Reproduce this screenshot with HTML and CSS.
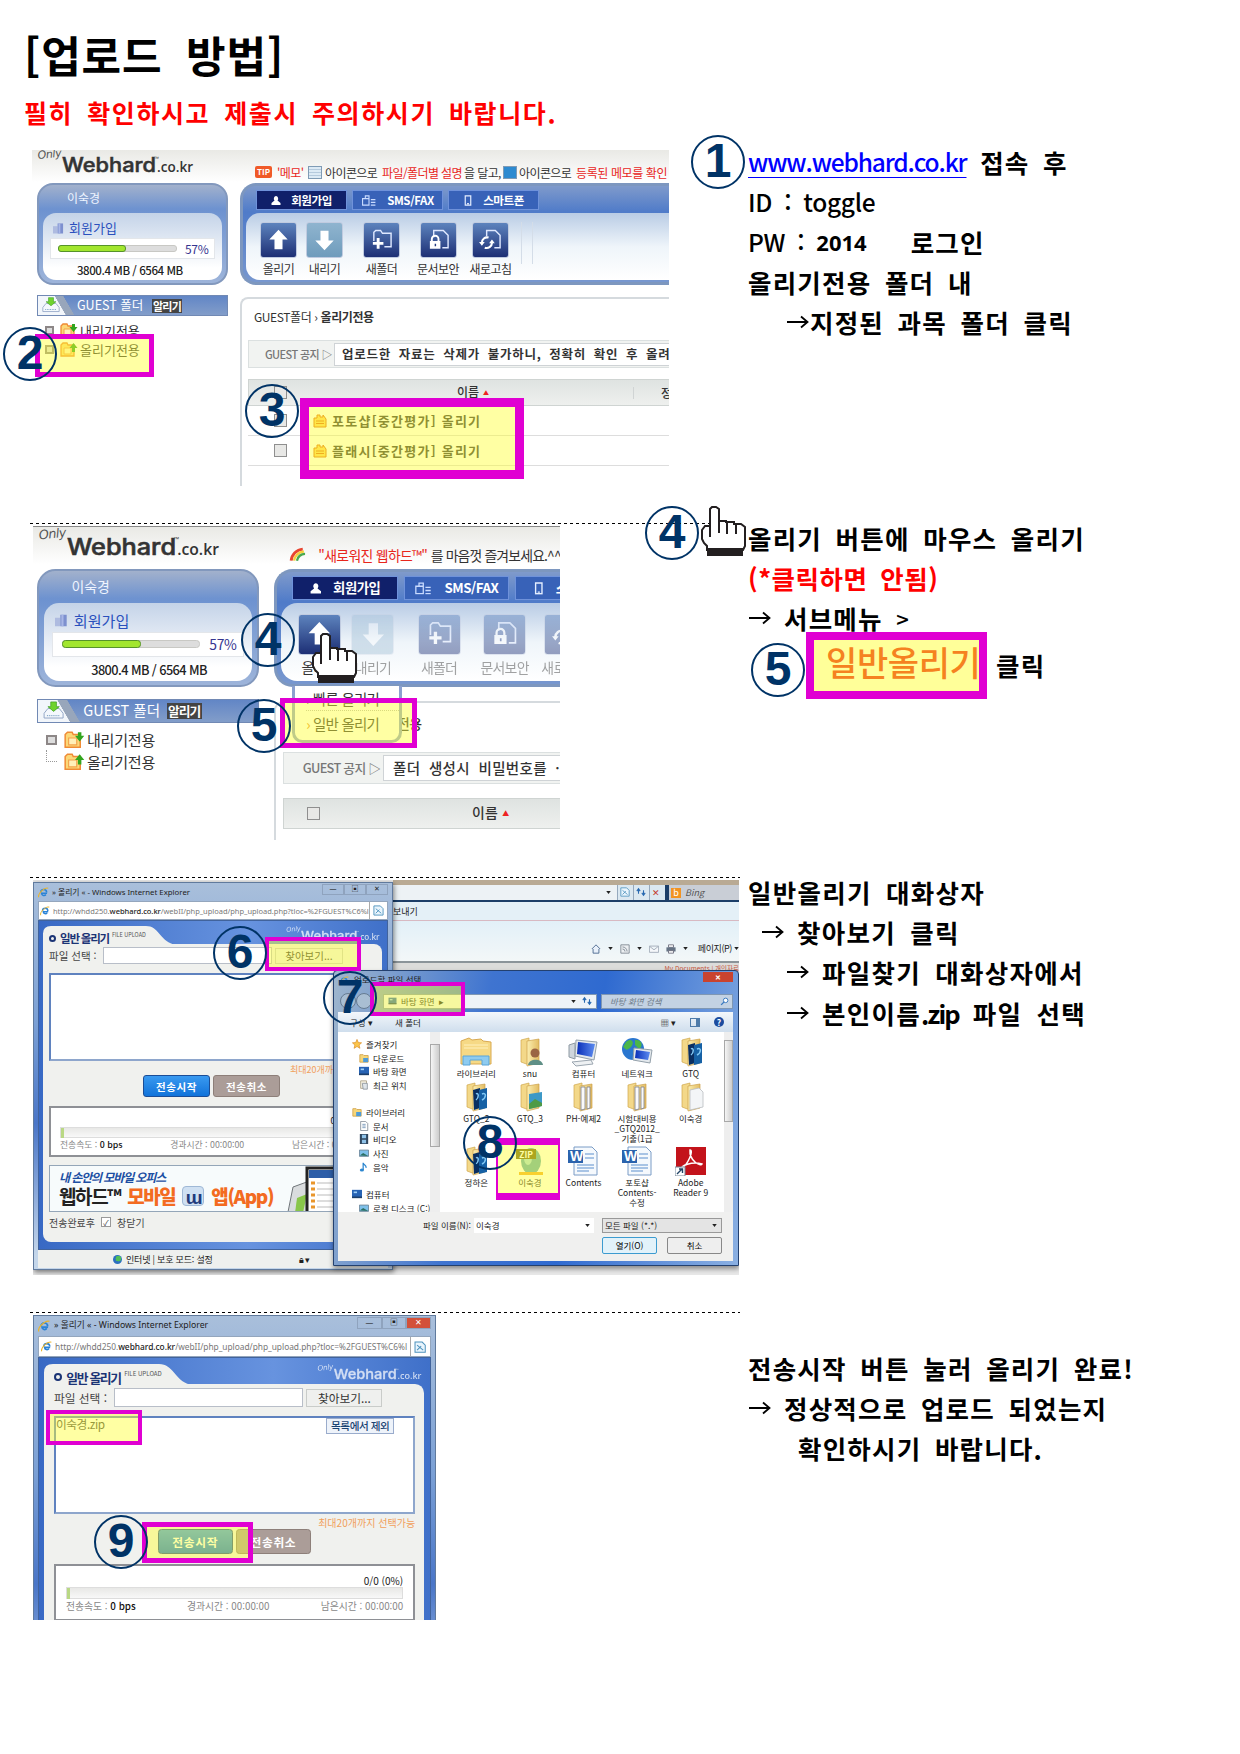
FILE: index.html
```html
<!DOCTYPE html>
<html lang="ko">
<head>
<meta charset="utf-8">
<title>업로드 방법</title>
<link rel="stylesheet" href="styles.css">
</head>
<body>
<svg class="defs" aria-hidden="true">
  <defs>
    <linearGradient id="gFolder" x1="0" x2="1"><stop offset="0" stop-color="#fbeeb0"/><stop offset="1" stop-color="#e3bc62"/></linearGradient>
    <linearGradient id="gScreen" x1="0" x2="1"><stop offset="0" stop-color="#0a2fb8"/><stop offset="1" stop-color="#5d8cf0"/></linearGradient>
    <symbol id="logo" viewBox="0 0 160 30">
      <text x="1" y="10" class="logo-only" textLength="24" transform="rotate(-6 1 10)">Only</text>
      <text x="25" y="23" class="logo-name" textLength="94" lengthAdjust="spacingAndGlyphs">Webhard</text>
      <text x="117" y="11" class="logo-tm">™</text>
      <text x="120" y="23" class="logo-tld" textLength="36" lengthAdjust="spacingAndGlyphs">.co.kr</text>
    </symbol>
    <symbol id="hand" viewBox="0 0 46 51">
      <path d="M9 31V3L11 1H15L18 3V15H25V16H33V18H40L44 21V40L42 44H6V40L3 37L1 33V24L4 20H9Z" fill="#fff" stroke="#231f20" stroke-width="2"/>
      <path d="M18 15V27M26 16V28M35 18V28" stroke="#231f20" stroke-width="2" fill="none"/>
      <path d="M6 42H42V50H6Z" fill="#231f20"/>
    </symbol>
    <symbol id="arrow" viewBox="0 0 24 16"><path d="M1 8H21M15 2.5L21.5 8L15 13.5" fill="none" stroke="#000" stroke-width="1.8"/></symbol>
    <symbol id="up" viewBox="0 0 20 20"><path d="M10 1L18 9.5H13.5V18H6.500V9.500H2Z" fill="#fff"/></symbol>
    <symbol id="newfolder" viewBox="0 0 24 24"><path d="M4 13V4L6 2H11L13 5H22V19H15" fill="none" stroke="#dfe8ff" stroke-width="1.5"/><path d="M7 10H10V14H14V17H10V21H7V17H3V14H7Z" fill="#fff"/></symbol>
    <symbol id="lock" viewBox="0 0 24 24"><path d="M7 9V2H17L22 7V20H16" fill="none" stroke="#dfe8ff" stroke-width="1.5"/><path d="M5 14V11A3.500 3.500 0 0 1 12 11V14" fill="none" stroke="#fff" stroke-width="2"/><path d="M3 13H14V21H3Z" fill="#fff"/><path d="M8 16H9.500V18.500H8Z" fill="#223a80"/></symbol>
    <symbol id="refresh" viewBox="0 0 24 24"><path d="M8 8V2H17L22 7V20H16" fill="none" stroke="#dfe8ff" stroke-width="1.500"/><path d="M10 9.500A5.500 5.500 0 0 0 3 15M6 20A5.500 5.500 0 0 0 13.500 15" fill="none" stroke="#fff" stroke-width="2.200"/><path d="M0 14H6L3 18ZM10.500 15.500H16.500L13.500 11.500Z" fill="#fff"/></symbol>
    <symbol id="person" viewBox="0 0 10 10"><path d="M5 0.500A2.200 2.600 0 0 1 6.500 5L9.500 7.500V9.500H.5V7.500L3.500 5A2.200 2.600 0 0 1 5 .5Z" fill="#fff"/></symbol>
    <symbol id="fax" viewBox="0 0 16 12"><path d="M4 4V1H8V4M8 4V11H1V4ZM10 5H15M10 8H15M10 11H15" fill="none" stroke="#c9dbff" stroke-width="1.200"/></symbol>
    <symbol id="phone" viewBox="0 0 10 12"><path d="M2 1H8V11H2ZM4 9.500H6" fill="none" stroke="#e5eeff" stroke-width="1.300"/></symbol>
    <symbol id="building" viewBox="0 0 12 12"><path d="M0 4H5V12H0Z" fill="#aebbe0"/><path d="M5 1H11V12H5Z" fill="#7d90cf"/><path d="M6 1H8V12H6Z" fill="#a9b7e6"/></symbol>
    <symbol id="drive" viewBox="0 0 24 22"><path d="M2 14L6 9H18L22 14V19H2Z" fill="#f4f8fd" stroke="#8fa3c4"/><path d="M5 16.500H19" stroke="#5c89b4" stroke-dasharray="1 1"/><path d="M9 2H15V7H18L12 12L6 7H9Z" fill="#6fd32e" stroke="#379b1e" stroke-width=".7"/></symbol>
    <symbol id="fdown" viewBox="0 0 18 16"><path d="M1 3L3 1H7L8 3H14V14H1Z" fill="#fbd878" stroke="#f08b35" stroke-width="1.300"/><path d="M4 6H11V12H4Z" fill="#fff0b8" stroke="#f3a24a"/><path d="M12 1H15V4H17.500L13.500 9L9.500 4H12Z" fill="#32a51e"/></symbol>
    <symbol id="ftop" viewBox="0 0 18 16"><path d="M1 3L3 1H7L8 3H14V14H1Z" fill="#fbd878" stroke="#f08b35" stroke-width="1.300"/><path d="M4 6H11V12H4Z" fill="#fff0b8" stroke="#f3a24a"/><path d="M12 10H15V6H17.500L13.500 1L9.500 6H12Z" fill="#32a51e"/></symbol>
    <symbol id="fileicon" viewBox="0 0 14 14"><path d="M1 4H4V1H7V3H10V1L13 5V13H1Z" fill="#ffd25a" stroke="#e06c10"/><path d="M3 7H11M3 9.500H11" stroke="#e06c10"/></symbol>
    <symbol id="ie" viewBox="0 0 14 14"><path d="M11.500 8H4.500A3 3 0 0 0 10 9.500" fill="none" stroke="#2b83d6" stroke-width="2"/><path d="M3.500 7A3.700 3.700 0 0 1 11 7" fill="none" stroke="#2b83d6" stroke-width="2"/><path d="M1 13C-1 9 8 0 13 1.500" fill="none" stroke="#e8b52f" stroke-width="1.400"/></symbol>
    <symbol id="page" viewBox="0 0 12 12"><path d="M1 1H8L11 4V11H1Z" fill="#e9f5fd" stroke="#4f93bd"/><path d="M3 4L9 9M3 9L7 5" stroke="#4f93bd"/></symbol>
    <symbol id="folder" viewBox="0 0 32 30"><path d="M7 3L15 1V28L7 25Z" fill="#f3d889" stroke="#d0a64c" stroke-width=".7"/><path d="M13 4L25 2V26L13 29Z" fill="url(#gFolder)" stroke="#cda14b" stroke-width=".7"/></symbol>
    <symbol id="psfolder" viewBox="0 0 32 30"><use href="#folder"/><path d="M13 8L20 6V26L14 28Z" fill="#0a2f62"/><path d="M19 8L27 6V26L19 28Z" fill="#1661a5"/><path d="M22 12C27 10 26 16 22 18M16 12C19 10 19 16 16 18" stroke="#80c8f5" stroke-width="1.500" fill="none"/></symbol>
    <symbol id="userfolder" viewBox="0 0 32 30"><use href="#folder"/><circle cx="21" cy="16" r="4.500" fill="#9a6544"/><path d="M14 28C15 21 28 21 29 28Z" fill="#5f8f86"/></symbol>
    <symbol id="photofolder" viewBox="0 0 32 30"><use href="#folder"/><path d="M15 12L28 10V24L15 27Z" fill="#3d99c7"/><path d="M15 22L21 17L28 21V24L15 27Z" fill="#4f9a45"/></symbol>
    <symbol id="docfolder" viewBox="0 0 32 30"><use href="#folder"/><path d="M14 5H18V27L14 28ZM20 5H23V26L20 27Z" fill="#fafafa" stroke="#7b7f8c" stroke-width=".8"/></symbol>
    <symbol id="emptyfolder" viewBox="0 0 32 30"><use href="#folder"/><path d="M15 8L24 6L28 10V25L15 28Z" fill="#f3f5f7" stroke="#b9bcc0" stroke-width=".8"/></symbol>
    <symbol id="library" viewBox="0 0 32 30"><path d="M1 4L9 1L12 3L21 2L23 4L31 5V27H1Z" fill="#f6d985" stroke="#d9a951"/><path d="M4 8H28M4 11H28" stroke="#fff1bd"/><path d="M3 19H29V28H22V23H10V28H3Z" fill="#8ecbf0" stroke="#5ba5d8"/></symbol>
    <symbol id="pc" viewBox="0 0 32 30"><path d="M2 8L8 6V22L2 20Z" fill="#cfd6dc" stroke="#8f9aa3"/><path d="M9 3L30 5L27 23L8 19Z" fill="#e4e9ed" stroke="#93a0aa"/><path d="M11 5L28 7L25 20L10 17Z" fill="url(#gScreen)"/><path d="M5 25L24 23L26 27L9 29Z" fill="#eef1f3" stroke="#9ba6b0"/></symbol>
    <symbol id="net" viewBox="0 0 32 30"><circle cx="12" cy="12" r="11" fill="#2a76cf"/><path d="M5 5C11 0 14 6 10 10C4 16 4 10 2 10ZM14 3C22 2 22 10 18 12L14 8Z" fill="#4bb649"/><path d="M13 11L31 13L29 26L12 23Z" fill="#e4e9ed" stroke="#93a0aa"/><path d="M15 13L29 15L27 23L14 21Z" fill="url(#gScreen)"/></symbol>
    <symbol id="word" viewBox="0 0 32 30"><path d="M7 1H25L30 6V29H7Z" fill="#f5f9fd" stroke="#7a9cc6"/><path d="M18 8H27M18 12H27M10 19H27M10 22H27M10 25H22" stroke="#8fb2dd" stroke-width="1.300"/><path d="M1 4H16V17H1Z" fill="#2b63ad"/><text x="3" y="15" class="word-w">W</text></symbol>
    <symbol id="adobe" viewBox="0 0 32 30"><path d="M1 1H31V29H1Z" fill="#c3131b"/><path d="M15 4C19 4 13 19 6 23C5 20 17 15 27 18C26 21 14 15 15 4Z" fill="none" stroke="#fff" stroke-width="1.500"/><path d="M0 21H10V30H0Z" fill="#fff" stroke="#789"/><path d="M2 28L7 23M4 23H7.500V27" stroke="#246" stroke-width="1.400" fill="none"/></symbol>
    <symbol id="egg" viewBox="0 0 32 30"><ellipse cx="17" cy="15" rx="10" ry="13" fill="#5aa9b4"/><ellipse cx="14" cy="12" rx="4" ry="7" fill="#a5dcdc"/><path d="M5 26H29V29H5Z" fill="#f2a92a"/></symbol>
    <symbol id="star" viewBox="0 0 12 12"><path d="M6 .5L7.600 4.300L11.500 4.600L8.500 7.200L9.500 11.200L6 9L2.500 11.200L3.500 7.200L.5 4.600L4.400 4.300Z" fill="#fbc54a" stroke="#d98a23" stroke-width=".8"/></symbol>
    <symbol id="note" viewBox="0 0 12 12"><path d="M5 9.500V1C6 4 9 3.500 8.500 7" fill="none" stroke="#2c86cf" stroke-width="1.500"/><ellipse cx="3.500" cy="9.500" rx="2.500" ry="1.800" fill="#2c86cf"/></symbol>
    <symbol id="minifolder" viewBox="0 0 12 12"><path d="M1 2H5L6 3H11V11H1Z" fill="#f6d679" stroke="#d0a24b"/><path d="M5 6H11V11H5Z" fill="#4e9cd8"/></symbol>
    <symbol id="screen" viewBox="0 0 12 12"><path d="M0 1H12V10H0Z" fill="#2763b4"/><path d="M2 3H6V5H2Z" fill="#9fd0f7"/><path d="M0 9H12V11H0Z" fill="#1c3f6b"/></symbol>
    <symbol id="recent" viewBox="0 0 12 12"><path d="M2 1H9V10H2Z" fill="#f6f2e3" stroke="#a99f86"/><path d="M4 4H10V11H5Z" fill="#dfe5ea" stroke="#8b949c"/></symbol>
    <symbol id="doc" viewBox="0 0 12 12"><path d="M2 .5H8L10.500 3V11.500H2Z" fill="#fff" stroke="#7f8995"/><path d="M4 4H8M4 6H8M4 8H8" stroke="#6d8fb4"/></symbol>
    <symbol id="film" viewBox="0 0 12 12"><path d="M1 0H11V12H1Z" fill="#30475f"/><path d="M3.500 1H8.500V5H3.500ZM3.500 7H8.500V11H3.500Z" fill="#8fc2e8"/></symbol>
    <symbol id="photo" viewBox="0 0 12 12"><path d="M.5 2.500H11.500V10H.5Z" fill="#7ec0ea" stroke="#667e92"/><path d="M1 9L5 6L11 9.500Z" fill="#2b6f62"/></symbol>
    <symbol id="home" viewBox="0 0 12 12"><path d="M1 6L6 1L11 6M2.500 6V11H9.500V6" fill="#e8f0fa" stroke="#3d5c85"/></symbol>
    <symbol id="rss" viewBox="0 0 12 12"><path d="M1 1H11V11H1Z" fill="#eceff2" stroke="#77818c"/><path d="M3 6A3 3 0 0 1 6 9M3 3.500A5.500 5.500 0 0 1 8.500 9" fill="none" stroke="#77818c"/></symbol>
    <symbol id="mail" viewBox="0 0 12 12"><path d="M.5 2.500H11.500V10H.5ZM1 3L6 7L11 3" fill="#f5f7fa" stroke="#9aa5b2"/></symbol>
    <symbol id="print" viewBox="0 0 12 12"><path d="M3 1H9V4H3Z" fill="#fff" stroke="#667"/><path d="M.5 4H11.500V9H.5Z" fill="#657384"/><path d="M3 8H9V11H3Z" fill="#fff" stroke="#667"/></symbol>
    <symbol id="glass" viewBox="0 0 12 12"><circle cx="7.500" cy="4.500" r="3" fill="#fff" stroke="#3d7bc0" stroke-width="1.300"/><path d="M5.500 6.500L1.500 10.500" stroke="#3d7bc0" stroke-width="1.800"/></symbol>
    <symbol id="caret" viewBox="0 0 6 4"><path d="M0 0H6L3 4Z" fill="#222"/></symbol>
    <symbol id="reload" viewBox="0 0 12 12"><path d="M3 8V3M1 5L3 2L5 5M9 4V10M7 7L9 10L11 7" fill="none" stroke="#2768b0" stroke-width="1.300"/></symbol>
    <symbol id="tab" viewBox="0 0 130 20" preserveAspectRatio="none"><path d="M0 20V8Q0 0 8 0H103C117 0 117 18 134 20Z" fill="#f0f1ee"/></symbol>
  </defs>
</svg>
<main class="page">
  <header class="doc-head">
    <h1>[업로드 방법]</h1>
    <p>필히 확인하시고 제출시 주의하시기 바랍니다.</p>
  </header>

  <section class="step step-1">
    <div class="shot-cell">
      <div class="hard">
        <div class="hard-top">
          <svg class="logo"><use href="#logo"/></svg>
          <p class="tip"><b class="tip-badge">TIP</b><span class="red t-memo">'메모'</span><i class="tip-grid"></i><span class="t-a">아이콘으로</span><span class="red t-b">파일/폴더별 설명</span><span class="t-c">을 달고,</span><i class="tip-grid blue"></i><span class="t-a">아이콘으로</span><span class="red t-e">등록된 메모를 확인</span></p>
        </div>
        <div class="hard-body">
          <aside class="side">
            <div class="user">
              <p class="user-name">이숙경</p>
              <div class="user-in">
                <p class="join"><svg><use href="#building"/></svg>회원가입</p>
                <div class="quota"><span class="meter"><i></i></span>57%</div>
                <p class="size">3800.4 MB / 6564 MB</p>
              </div>
            </div>
            <div class="guest"><span class="guest-tab"><svg><use href="#drive"/></svg></span><span class="guest-name">GUEST 폴더</span><b>알리기</b></div>
            <ul class="tree">
              <li><i class="plus"></i><svg><use href="#fdown"/></svg>내리기전용</li>
              <li><i class="plus"></i><svg><use href="#ftop"/></svg>올리기전용</li>
            </ul>
          </aside>
          <div class="work">
            <div class="bar">
              <div class="tabs"><span class="on"><svg><use href="#person"/></svg>회원가입</span><span><svg class="wide"><use href="#fax"/></svg>SMS/FAX</span><span><svg><use href="#phone"/></svg>스마트폰</span></div>
              <div class="tools">
                <span><i class="ico"><svg><use href="#up"/></svg></i>올리기</span>
                <span><i class="ico pale"><svg class="flip"><use href="#up"/></svg></i>내리기</span>
                <span><i class="ico"><svg><use href="#newfolder"/></svg></i>새폴더</span>
                <span><i class="ico"><svg><use href="#lock"/></svg></i>문서보안</span>
                <span><i class="ico"><svg><use href="#refresh"/></svg></i>새로고침</span>
                <span class="grip"></span>
              </div>
            </div>
            <div class="list">
              <p class="crumb">GUEST폴더 › <b>올리기전용</b></p>
              <div class="notice"><span>GUEST 공지 ▷</span><p>업로드한 자료는 삭제가 불가하니, 정확히 확인 후 올려</p></div>
              <div class="thead"><i class="box"></i><span class="col-name">이름<em>▲</em></span><span class="col-info">정</span></div>
              <div class="trow"><i class="box"></i><svg><use href="#fileicon"/></svg>포토샵[중간평가] 올리기</div>
              <div class="trow"><i class="box"></i><svg><use href="#fileicon"/></svg>플래시[중간평가] 올리기</div>
            </div>
          </div>
        </div>
      </div>
    </div>
    <div class="guide">
      <p><a class="latin link">www.webhard.co.kr</a> 접속 후</p>
      <p class="latin">ID : toggle</p>
      <p><span class="latin">PW : </span><span class="year">2014</span><span class="login">로그인</span></p>
      <p>올리기전용 폴더 내</p>
      <p class="in-3"><svg class="arr"><use href="#arrow"/></svg>지정된 과목 폴더 클릭</p>
    </div>
    <span class="mark m2"></span><span class="mark m3"></span>
    <b class="num n1">1</b><b class="num n2">2</b><b class="num n3">3</b>
  </section>

  <section class="step step-2 ruled">
    <div class="shot-cell">
      <div class="hard large">
        <div class="hard-top">
          <svg class="logo"><use href="#logo"/></svg>
          <p class="tip"><svg class="rainbow" viewBox="0 0 14 12"><path d="M1 11A11 11 0 0 1 11 1" stroke="#e8452f" stroke-width="2.500" fill="none"/><path d="M3.500 11A9 9 0 0 1 12 3" stroke="#f6cf3b" stroke-width="2" fill="none"/><path d="M6 11A7 7 0 0 1 13 5" stroke="#4aa94f" stroke-width="2" fill="none"/></svg><span class="red">"새로워진 웹하드™"</span><span class="t-d">를 마음껏 즐겨보세요.^^</span></p>
        </div>
        <div class="hard-body">
          <aside class="side">
            <div class="user">
              <p class="user-name">이숙경</p>
              <div class="user-in">
                <p class="join"><svg><use href="#building"/></svg>회원가입</p>
                <div class="quota"><span class="meter"><i></i></span>57%</div>
                <p class="size">3800.4 MB / 6564 MB</p>
              </div>
            </div>
            <div class="guest"><span class="guest-tab"><svg><use href="#drive"/></svg></span><span class="guest-name">GUEST 폴더</span><b>알리기</b></div>
            <ul class="tree">
              <li><i class="plus"></i><svg><use href="#fdown"/></svg>내리기전용</li>
              <li><i class="elbow"></i><svg><use href="#ftop"/></svg>올리기전용</li>
            </ul>
          </aside>
          <div class="work">
            <div class="bar">
              <div class="tabs"><span class="on"><svg><use href="#person"/></svg>회원가입</span><span><svg class="wide"><use href="#fax"/></svg>SMS/FAX</span><span><svg><use href="#phone"/></svg>스마트폰</span></div>
              <div class="tools dim">
                <span class="live"><i class="ico"><svg><use href="#up"/></svg></i>올리기</span>
                <span><i class="ico pale"><svg class="flip"><use href="#up"/></svg></i>내리기</span>
                <span><i class="ico"><svg><use href="#newfolder"/></svg></i>새폴더</span>
                <span><i class="ico"><svg><use href="#lock"/></svg></i>문서보안</span>
                <span><i class="ico"><svg><use href="#refresh"/></svg></i>새로고침</span>
              </div>
            </div>
            <div class="list">
              <p class="crumb"><b>전용</b></p>
              <div class="notice"><span>GUEST 공지 ▷</span><p>폴더 생성시 비밀번호를 ·</p></div>
              <div class="thead"><i class="box"></i><span class="col-name">이름<em>▲</em></span></div>
            </div>
          </div>
        </div>
        <div class="submenu"><p>› 빠른 올리기</p><p><em>›</em> 일반 올리기</p></div>
      </div>
    </div>
    <div class="guide">
      <p>올리기 버튼에 마우스 올리기</p>
      <p class="warn">(*클릭하면 안됨)</p>
      <p><svg class="arr gap"><use href="#arrow"/></svg>서브메뉴 <span class="gt">&gt;</span></p>
      <p class="pick"><span class="pick-box">일반올리기</span>클릭</p>
    </div>
    <span class="mark m5"></span>
    <b class="num n4">4</b><b class="num n5">5</b><b class="num n4r">4</b><b class="num n5r">5</b>
    <svg class="hand h1"><use href="#hand"/></svg><svg class="hand h2"><use href="#hand"/></svg>
  </section>

  <section class="step step-3 ruled">
    <div class="shot-cell">
      <div class="desk">
        <div class="ie-back">
          <div class="ie-addr"><span class="ie-url"><svg><use href="#caret"/></svg></span><span class="ie-b"><svg><use href="#page"/></svg></span><span class="ie-b"><svg><use href="#reload"/></svg></span><span class="ie-b x">✕</span><span class="bing"><i>b</i>Bing</span></div>
          <div class="ie-menu">보내기</div>
          <div class="ie-cmd"><svg><use href="#home"/></svg><svg class="c"><use href="#caret"/></svg><svg><use href="#rss"/></svg><svg class="c"><use href="#caret"/></svg><svg><use href="#mail"/></svg><svg><use href="#print"/></svg><svg class="c"><use href="#caret"/></svg><span>페이지(P)</span><svg class="c last"><use href="#caret"/></svg></div>
          <div class="ie-tabs">My Documents | 개인자료</div>
        </div>
        <div class="upload">
          <div class="up-title"><svg><use href="#ie"/></svg><span>» 올리기 « - Windows Internet Explorer</span><span class="ctl">—</span><span class="ctl">▣</span><span class="ctl">✕</span></div>
          <div class="up-addr"><svg><use href="#ie"/></svg><span class="url">http://whdd250.<b>webhard.co.kr</b>/webII/php_upload/php_upload.php?tloc=%2FGUEST%C6%l</span><span class="pg"><svg><use href="#page"/></svg></span></div>
          <div class="up-body">
            <div class="up-head"><div class="up-tab"><svg><use href="#tab"/></svg><p><i></i><b>일반 올리기</b><small>FILE UPLOAD</small></p></div><svg class="logo white"><use href="#logo"/></svg></div>
            <div class="up-panel">
              <div class="pickfile"><span>파일 선택 :</span><i></i><button>찾아보기...</button></div>
              <div class="files"></div>
              <p class="limit">최대20개까지 선택가능</p>
              <div class="acts"><button class="go">전송시작</button><button class="no">전송취소</button></div>
              <div class="prog"><p>0/0 (0%)</p><div class="prog-bar"><i></i></div><div class="stats"><span>전송속도 : <b>0 bps</b></span><span>경과시간 : 00:00:00</span><span>남은시간 : 00:00:00</span></div></div>
              <div class="banner"><div><em>내 손안의 모바일 오피스</em><p>웹하드™ <strong>모바일</strong> <i>ɯ</i> <strong>앱(App)</strong></p></div><svg viewBox="0 0 60 46"><path d="M2 16L24 8L16 46H-4Z" transform="translate(6 4)" fill="#d9dcde" stroke="#70767a"/><path d="M12 31L22 27L18 46H10Z" fill="#88c64a"/><path d="M22 1H58V46H22Z" fill="#fff" stroke="#222" stroke-width="3"/><path d="M24 3H57V11H24Z" fill="#2d5ea8"/><path d="M26 16H30M26 22H30M26 28H30M26 34H30M26 40H30" stroke="#e9962c" stroke-width="3"/><path d="M32 16H50M32 22H50M32 28H50M32 34H50M32 40H50" stroke="#bbb"/></svg></div>
              <p class="after">전송완료후 <i>✓</i> 창닫기</p>
            </div>
          </div>
          <div class="up-status"><span class="globe"></span>인터넷 | 보호 모드: 설정<span class="st-r">🔒︎ ▾</span></div>
        </div>
        <div class="dialog">
          <div class="dl-title"><svg><use href="#ie"/></svg><span>업로드할 파일 선택</span><b>✕</b></div>
          <div class="dl-addr"><i class="nav"></i><i class="nav"></i><div class="path"><svg><use href="#screen"/></svg>바탕 화면 <em>▸</em><svg class="c"><use href="#caret"/></svg><svg class="rl"><use href="#reload"/></svg></div><div class="search"><span>바탕 화면 검색</span><svg><use href="#glass"/></svg></div></div>
          <div class="dl-tools"><span>구성 ▾</span><span class="nf">새 폴더</span><span class="v">▦ ▾</span><i></i><b>?</b></div>
          <div class="dl-main">
            <ul class="places">
              <li class="top"><svg><use href="#star"/></svg>즐겨찾기</li><li><svg><use href="#minifolder"/></svg>다운로드</li><li><svg><use href="#screen"/></svg>바탕 화면</li><li><svg><use href="#recent"/></svg>최근 위치</li>
              <li class="top gap"><svg><use href="#minifolder"/></svg>라이브러리</li><li><svg><use href="#doc"/></svg>문서</li><li><svg><use href="#film"/></svg>비디오</li><li><svg><use href="#photo"/></svg>사진</li><li><svg><use href="#note"/></svg>음악</li>
              <li class="top gap"><svg><use href="#screen"/></svg>컴퓨터</li><li><svg><use href="#photo"/></svg>로컬 디스크 (C:)</li>
            </ul>
            <div class="scroll left"><i></i></div>
            <div class="grid">
              <span><svg><use href="#library"/></svg>라이브러리</span><span><svg><use href="#userfolder"/></svg>snu</span><span><svg><use href="#pc"/></svg>컴퓨터</span><span><svg><use href="#net"/></svg>네트워크</span><span><svg><use href="#psfolder"/></svg>GTQ</span>
              <span><svg><use href="#psfolder"/></svg>GTQ_2</span><span><svg><use href="#photofolder"/></svg>GTQ_3</span><span><svg><use href="#docfolder"/></svg>PH-예제2</span><span><svg><use href="#docfolder"/></svg>시험대비용<br>_GTQ2012_<br>기출(1급</span><span><svg><use href="#emptyfolder"/></svg>이숙경</span>
              <span><svg><use href="#psfolder"/></svg>정하은</span><span class="zip"><svg><use href="#egg"/></svg><b>ZIP</b>이숙경</span><span><svg><use href="#word"/></svg>Contents</span><span><svg><use href="#word"/></svg>포토샵<br>Contents-<br>수정</span><span><svg><use href="#adobe"/></svg>Adobe<br>Reader 9</span>
            </div>
            <div class="scroll right"><i></i></div>
          </div>
          <div class="dl-foot">
            <div class="fn"><span>파일 이름(N):</span><p>이숙경<svg><use href="#caret"/></svg></p><p class="sel">모든 파일 (*.*)<svg><use href="#caret"/></svg></p></div>
            <div class="btns"><button class="def">열기(O)</button><button>취소</button></div>
          </div>
        </div>
      </div>
    </div>
    <div class="guide">
      <p>일반올리기 대화상자</p>
      <p class="in-1"><svg class="arr gap"><use href="#arrow"/></svg>찾아보기 클릭</p>
      <p class="in-3"><svg class="arr gap"><use href="#arrow"/></svg>파일찾기 대화상자에서</p>
      <p class="in-3"><svg class="arr gap"><use href="#arrow"/></svg>본인이름<span class="ext">.zip</span> 파일 선택</p>
    </div>
    <span class="mark m6"></span><span class="mark m7"></span><span class="mark m8"></span>
    <b class="num n6">6</b><b class="num n7">7</b><b class="num n8">8</b>
  </section>

  <section class="step step-4 ruled">
    <div class="shot-cell">
      <div class="upload big">
        <div class="up-title"><svg><use href="#ie"/></svg><span>» 올리기 « - Windows Internet Explorer</span><span class="ctl">—</span><span class="ctl">▣</span><span class="ctl close">✕</span></div>
        <div class="up-addr"><svg><use href="#ie"/></svg><span class="url">http://whdd250.<b>webhard.co.kr</b>/webII/php_upload/php_upload.php?tloc=%2FGUEST%C6%l</span><span class="pg"><svg><use href="#page"/></svg></span></div>
        <div class="up-body">
          <div class="up-head"><div class="up-tab"><svg><use href="#tab"/></svg><p><i></i><b>일반 올리기</b><small>FILE UPLOAD</small></p></div><svg class="logo white"><use href="#logo"/></svg></div>
          <div class="up-panel">
            <div class="pickfile"><span>파일 선택 :</span><i></i><button>찾아보기...</button></div>
            <div class="files"><span>이숙경.zip</span><button>목록에서 제외</button></div>
            <p class="limit">최대20개까지 선택가능</p>
            <div class="acts"><button class="go">전송시작</button><button class="no">전송취소</button></div>
            <div class="prog"><p>0/0 (0%)</p><div class="prog-bar"><i></i></div><div class="stats"><span>전송속도 : <b>0 bps</b></span><span>경과시간 : 00:00:00</span><span>남은시간 : 00:00:00</span></div></div>
          </div>
        </div>
      </div>
    </div>
    <div class="guide">
      <p>전송시작 버튼 눌러 올리기 완료!</p>
      <p><svg class="arr gap"><use href="#arrow"/></svg>정상적으로 업로드 되었는지</p>
      <p class="in-4">확인하시기 바랍니다.</p>
    </div>
    <span class="mark m9a"></span><span class="mark m9"></span>
    <b class="num n9">9</b>
  </section>
</main>
</body>
</html>
```

FILE: styles.css
```css
* { box-sizing: border-box; }
body { margin: 0; background: #fff; font-family: "Noto Sans CJK KR", "Liberation Sans", sans-serif; color: #000; }
h1, p, ul { margin: 0; padding: 0; }
li { list-style: none; }
i, em { font-style: normal; }
button { font: inherit; padding: 0; margin: 0; white-space: nowrap; }
svg { flex: none; display: block; overflow: visible; }
.defs { position: absolute; width: 0; height: 0; }
.page { width: 1240px; height: 1754px; display: flex; flex-direction: column; overflow: hidden; }

/* Document heading */
.doc-head { height: 150px; padding: 24px 0 0 24px; white-space: nowrap; }
h1 { font-size: 43px; line-height: 60px; font-weight: 700; letter-spacing: .900px; word-spacing: 10.500px; }
.doc-head p { margin-top: 8px; font-size: 25px; line-height: 40px; font-weight: 700; color: #f00; letter-spacing: 1.600px; word-spacing: 5.400px; }

/* Steps */
.step { position: relative; flex: none; display: grid; grid-template-columns: 748px 1fr; }
.step-1 { height: 373px; }
.step-2 { height: 354px; }
.step-3 { height: 435px; }
.step-4 { height: 442px; }
.shot-cell { padding-left: 33px; }
.step-1 .shot-cell { padding-left: 32px; }
.step-2 .shot-cell, .step-4 .shot-cell, .step-3 .shot-cell { padding-top: 3px; }
.ruled { background: repeating-linear-gradient(90deg, #000 0 3px, transparent 3px 6px) 30px 0 / 710px 1px no-repeat; }
.guide { font-size: 25.500px; line-height: 40.200px; font-weight: 700; letter-spacing: 1.200px; word-spacing: 5.300px; white-space: nowrap; }
.step-1 .guide { margin-top: -8px; }
.step-2 .guide { margin-top: -5px; }
.step-3 .guide { margin-top: -5px; letter-spacing: 1.300px; word-spacing: 5.800px; }
.step-4 .guide { margin-top: 36px; }
.guide p { display: flex; align-items: center; height: 40.200px; white-space: pre; }
.step-1 .guide p { height: 40px; }
.latin { font-weight: 500; font-size: 24.500px; letter-spacing: -.3px; word-spacing: 5.500px; }
.link { color: #00f; text-decoration: underline; text-decoration-thickness: 1px; text-underline-offset: 5px; letter-spacing: -1.150px; }
.year { font-family: "Noto Sans", sans-serif; font-size: 22px; letter-spacing: 0; }
.login { margin-left: 44px; }
.warn { color: #f00; letter-spacing: .5px; }
.arr { width: 24px; height: 16px; }
.arr.gap { margin-right: 12px; }
.in-1 { padding-left: 13px; }
.in-3 { padding-left: 38px; }
.in-4 { padding-left: 50px; }
.gt { font-weight: 500; font-size: 22px; }
.ext { letter-spacing: -2px; }
.guide .pick { height: 67px; margin-top: -7px; padding-left: 58px; gap: 9px; letter-spacing: 1.200px; }
.pick-box { width: 181px; height: 67px; border: 8px solid #e000d2; background: #ffff99; color: #f58220; font-size: 34px; line-height: 44px; font-weight: 500; letter-spacing: -.4px; padding-left: 12px; overflow: hidden; }

/* Numbered badges, highlight frames and pointers over the screenshots */
.num { position: absolute; width: 54px; height: 54px; border: 2px solid #036; border-radius: 50%; color: #036; font: 700 48px/47px "Liberation Sans", sans-serif; text-align: center; }
.n1 { left: 691px; top: -15px; }
.n2 { left: 3px; top: 177px; }
.n3 { left: 245px; top: 234px; }
.n4 { left: 241px; top: 90px; }
.n5 { left: 237px; top: 176px; }
.n4r { left: 645px; top: -17px; }
.n5r { left: 751px; top: 120px; }
.n6 { left: 213px; top: 49px; }
.n7 { left: 323px; top: 94px; }
.n8 { left: 463px; top: 239px; }
.n9 { left: 94px; top: 203px; }
.mark { position: absolute; border: 4px solid #e000d2; background: rgba(255, 255, 50, .45); }
.m2 { left: 35px; top: 184px; width: 119px; height: 43px; border-width: 5px; }
.m3 { left: 300px; top: 248px; width: 224px; height: 81px; border-width: 9px; }
.m5 { left: 280px; top: 175px; width: 137px; height: 50px; border-width: 5px; }
.m6 { left: 265px; top: 60px; width: 96px; height: 34px; }
.m7 { left: 370px; top: 105px; width: 95px; height: 34px; }
.m8 { left: 496px; top: 261px; width: 64px; height: 62px; border-width: 7px 2px; }
.m9a { left: 46px; top: 98px; width: 96px; height: 35px; }
.m9 { left: 142px; top: 210px; width: 111px; height: 41px; border-width: 5px; }
.hand { position: absolute; width: 46px; height: 51px; }
.h1 { left: 312px; top: 110px; }
.h2 { left: 701px; top: -17px; }

/* Webhard main page */
.logo { width: 160px; height: 30px; }
.logo-only { font: italic 11px "DejaVu Sans", sans-serif; fill: #555; }
.logo-name { font: 500 19.500px "Inter", sans-serif; fill: #333; stroke: #333; stroke-width: .5; }
.logo-tm { font: 5px "Liberation Sans", sans-serif; fill: #333; }
.logo-tld { font: 600 14px "Open Sans", sans-serif; fill: #333; }
.hard { position: relative; width: 637px; height: 336px; overflow: hidden; background: linear-gradient(#e9e9e5, #fff 32px); font-size: 12px; white-space: nowrap; color: #333; }
.hard.large { zoom: 1.16; width: 454px; height: 271px; border-top: 1px solid #888; }
.hard-top { height: 33px; display: flex; padding-left: 5px; }
.large .hard-top { height: 36px; padding: 2px 0 0 4px; }
.hard .logo { margin-top: -1px; }
.tip { display: flex; align-items: center; height: 18px; margin: 13px 0 0 58px; letter-spacing: -.6px; }
.tip-badge { width: 17px; height: 12px; background: #f05a28; color: #fff; font-size: 8px; line-height: 12px; text-align: center; letter-spacing: 0; margin-right: 5px; border-radius: 2px; }
.red { color: #e8261c; }
.t-memo { width: 31px; }
.tip-grid { width: 14px; height: 13px; border: 1px solid #7f9bb5; background: repeating-linear-gradient(#dceaf5 0 2px, #b5cadd 2px 3px); margin-right: 3px; }
.tip-grid.blue { background: #2d8ad0; margin-right: 2px; }
.t-a { width: 57px; }
.t-b { width: 82px; }
.t-c { width: 39px; }
.t-d { margin-left: 3px; letter-spacing: -.75px; }
.t-e { letter-spacing: -.4px; }
.rainbow { width: 14px; height: 12px; margin-right: 10px; }
.large .tip { margin-left: 58px; }
.hard-body { display: grid; grid-template-columns: 203px 1fr; padding-left: 5px; }
.large .hard-body { grid-template-columns: 204.500px 1fr; padding-left: 3.500px; }
.user { width: 191px; height: 102px; border: 2px solid #8298bd; border-radius: 16px; background: linear-gradient(#a2b1cc, #6d92d0 24px, #9db4da); padding: 0 4px; }
.user-name { height: 28px; padding-left: 24px; line-height: 26px; color: #eef4ff; letter-spacing: 0; }
.user-in { height: 67px; border-radius: 13px; background: linear-gradient(#c4d3e8, #fff 55px); padding: 4px 7px 0; }
.join { display: flex; align-items: center; gap: 5px; height: 21px; padding-left: 3px; color: #2a50bd; font-size: 13px; letter-spacing: 0; }
.join svg { width: 11px; height: 12px; }
.quota { display: flex; align-items: center; height: 21px; background: #fff; border: 1px solid #e3e6ea; color: #35358f; font-size: 12px; gap: 8px; padding-left: 7px; letter-spacing: -.3px; }
.large .quota { padding-left: 8px; }
.meter { width: 119px; height: 7px; border: 1px solid #c8c8c4; border-radius: 3px; background: #ddd; }
.meter i { display: block; width: 58%; height: 7px; margin-top: -1px; margin-left: -1px; border: 1px solid #56932a; border-radius: 3px; background: #a2e62e; }
.size { padding-left: 27px; font-size: 11.500px; line-height: 22px; font-weight: 500; letter-spacing: -.45px; color: #222; }
.large .size { padding-left: 34px; font-size: 11px; letter-spacing: -.5px; }
.guest { margin-top: 10px; width: 191px; height: 21px; display: flex; align-items: center; background: linear-gradient(#6286c6, #829dc9); border: 1px solid #7189b4; color: #fff; font-size: 12.500px; }
.guest-tab { width: 39px; height: 19px; background: linear-gradient(60deg, #f2f6fb 55%, #98a6bb 56% 72%, transparent 73%); padding-left: 3px; }
.guest-tab svg { width: 20px; height: 18px; }
.guest-name { width: 75px; letter-spacing: 0; margin-top: -2px; }
.large .guest-name { width: 72px; }
.guest b { background: #444; font-size: 11px; line-height: 14px; padding: 0 1px; letter-spacing: -.8px; }
.tree { padding: 5px 0 0 8px; }
.tree li { display: flex; align-items: center; height: 19px; font-size: 13px; }
.large .tree li { letter-spacing: -.2px; }
.tree svg { width: 18px; height: 16px; margin: 0 2px 0 6px; }
.plus { width: 9px; height: 9px; border: 2px solid #8d8787; background: #ddd; }
.elbow { width: 9px; height: 10px; border: 1px dotted #999; border-width: 0 0 1px 1px; margin-top: -10px; }
.bar { height: 102px; border: 3px solid #7d97bf; border-right: 0; border-radius: 16px 0 0 16px; background: linear-gradient(#7f9acb, #4f7bc9 26px, #7797cf); padding-left: 3px; overflow: hidden; }
.tabs { height: 27px; padding: 4px 0 0 10px; display: flex; gap: 5px; }
.tabs span { flex: none; width: 91px; height: 20px; border: 1px solid #6f92da; background: #3862b8; color: #fff; display: flex; align-items: center; justify-content: center; gap: 10px; font-size: 11.500px; font-weight: 700; letter-spacing: -.4px; }
.tabs .on { background: #10206a; }
.tabs svg { width: 10px; height: 11px; }
.tabs svg.wide { width: 16px; }
.tools { height: 67px; border-radius: 14px 0 0 14px; background: linear-gradient(#b9cce5, #eff5fa 34px, #fff); display: grid; grid-template-columns: 46px 46px 68px 45px 60px 12px; padding: 9px 0 0 9.500px; font-size: 12px; }
.large .tools { padding-left: 10.500px; }
.tools span { display: flex; flex-direction: column; align-items: center; letter-spacing: -.6px; line-height: 21px; }
.ico { width: 37px; height: 36px; border: 1px solid #c0cbe0; border-radius: 3px; background: linear-gradient(#5d83bd, #1d2f75); display: grid; place-items: center; }
.ico svg { width: 23px; height: 24px; }
.ico.pale { background: linear-gradient(#8fb4cf, #6f9cbc); }
.flip { transform: rotate(180deg); }
.tools .grip { border: 1px solid #d4dde8; border-width: 0 1px; height: 42px; }
.dim span { opacity: .45; }
.dim .ico.pale { opacity: .6; }
.dim .live { opacity: 1; }
.list { margin-top: 12px; height: 190px; border: 2px solid #d5dade; border-right: 0; border-bottom: 0; border-radius: 8px 0 0; padding-left: 6px; background: #fff; }
.crumb { height: 41px; padding-left: 6px; line-height: 35px; letter-spacing: -.4px; }
.large .crumb { height: 42px; padding-left: 98px; }
.large .crumb b { font-weight: 500; }
.notice { height: 28px; display: flex; align-items: center; border: 1px solid #dbe0e0; border-right: 0; background: #f1f3f1; }
.notice span { width: 85px; padding-left: 16px; font-size: 11px; letter-spacing: -.6px; font-weight: 500; color: #777; }
.notice p { flex: 1; height: 23px; border: 1px solid #cfd3d6; border-right: 0; background: #fff; padding-left: 7px; line-height: 20px; font-size: 12.500px; font-weight: 700; word-spacing: 3.500px; letter-spacing: .75px; overflow: hidden; }
.large .notice p { font-weight: 500; letter-spacing: .3px; padding-left: 8px; }
.thead { margin-top: 11px; height: 27px; display: flex; align-items: center; border: 1px solid #cfd4d2; border-right: 0; background: linear-gradient(#dfe3e1, #eef0ee); font-weight: 500; }
.large .thead { margin-top: 12px; }
.box { flex: none; width: 13px; height: 13px; border: 1px solid #8f8f8f; background: #e8e8e6; margin-left: 26px; }
.thead .box { margin-left: 25px; }
.large .thead .box { margin-left: 20px; width: 11px; height: 11px; }
.col-name { margin-left: 170px; width: 177px; height: 12px; line-height: 10px; border-right: 1px solid #d0d4d4; }
.large .col-name { margin-left: 131px; }
.col-name em { font-size: 6px; color: #e22; margin-left: 4px; vertical-align: middle; }
.col-info { margin-left: 27px; }
.trow { height: 30px; display: flex; align-items: center; border-bottom: 1px solid #ddd; font-size: 13px; font-weight: 700; letter-spacing: 1.250px; }
.trow svg { width: 14px; height: 14px; margin: 0 5px 0 26px; }
.submenu { position: absolute; left: 223px; top: 137px; width: 95px; height: 49px; border: 3px solid #8ba0cf; border-top: 0; border-radius: 0 0 9px 9px; background: #fff; padding-left: 10px; line-height: 23px; font-size: 12.500px; letter-spacing: -.7px; overflow: hidden; }
.submenu p:first-child { height: 22px; line-height: 22px; border-bottom: 1px dotted #bbb; }
.submenu em { color: #e88b1d; }

/* Upload popup */
.desk { position: relative; width: 706px; height: 395px; overflow: hidden; background: #e8e8e8; }
.upload { position: absolute; left: 0; top: 2px; width: 360px; height: 388px; border: 1px solid #607a9d; background: linear-gradient(#a9bfdb, #7ba0d5 140px, #4a76c8 240px, #c4d6ea 372px); padding: 0 4px; font-size: 9.500px; white-space: nowrap; box-shadow: 1px 2px 5px rgba(0, 0, 0, .5); color: #444; }
.upload.big { position: static; zoom: 1.117; width: 361px; height: 273px; overflow: hidden; box-shadow: none; border-bottom: 0; }
.up-title { height: 18px; display: flex; align-items: center; font: 7.800px "Noto Sans", "Noto Sans CJK KR", sans-serif; color: #222; }
.up-title svg { width: 11px; height: 11px; margin-right: 3px; }
.up-title span:nth-child(2) { flex: 1; margin-top: -2px; }
.ctl { width: 22px; height: 11px; border: 1px solid #8fa3be; font-size: 7px; line-height: 8px; text-align: center; margin-bottom: 6px; }
.ctl.close { background: #d3513a; color: #fff; }
.up-addr { height: 19px; display: flex; align-items: center; background: #fff; border: 1px solid #94a6bd; font: 7.500px "Noto Sans", sans-serif; color: #777; }
.up-addr > svg { width: 10px; height: 10px; margin: 0 3px 0 1px; }
.url { flex: 1; overflow: hidden; letter-spacing: -.02px; }
.url b { font-weight: 500; color: #222; }
.pg { width: 18px; padding: 3px; border-left: 1px solid #aaa; }
.pg svg { width: 11px; height: 11px; }
.up-body { height: 330px; background: linear-gradient(90deg, #3869c4, #6793df 60%, #3f70c9); padding: 5px 5px 0 4px; border: 1px solid #41639c; }
.up-head { height: 18px; display: flex; justify-content: space-between; }
.up-tab { width: 130px; height: 18px; position: relative; }
.up-tab > svg { position: absolute; inset: 0; width: 130px; height: 19px; }
.up-tab p { position: relative; display: flex; align-items: center; height: 24px; padding-left: 6px; }
.big .up-tab p { padding-left: 9px; }
.up-tab i { width: 7px; height: 7px; border: 2px solid #1b3475; border-radius: 50%; margin-right: 4px; }
.up-tab b { font-size: 11.500px; letter-spacing: -1.200px; color: #1b3475; }
.up-tab small { font-size: 5.500px; margin: -6px 0 0 3px; color: #555; }
.logo.white { width: 96px; height: 18px; opacity: .75; filter: brightness(0) invert(1); }
.up-panel { height: 298px; border-radius: 0 8px 8px 8px; background: #f0f1ee; padding: 3px 5px 0 6px; }
.big .up-panel { padding: 4px 8px 0 9px; }
.pickfile { display: flex; height: 17px; align-items: center; }
.pickfile span { width: 54px; font-size: 10.500px; }
.pickfile i { width: 169px; height: 17px; border: 1px solid #b8bec8; background: #fff; }
.pickfile button { width: 68px; height: 16px; margin-left: 3px; border: 1px solid #c9ccc9; background: #eff0ee; font-size: 10.500px; line-height: 13px; color: #333; }
.files { margin-top: 9px; height: 88px; border: 2px solid #5f82bf; border-color: #5f82bf #8ea6cc #8ea6cc #5f82bf; background: #fff; display: flex; justify-content: space-between; padding-right: 17px; font-size: 10.500px; line-height: 11px; }
.big .files { height: 87px; margin-top: 8px; }
.files span { letter-spacing: -.4px; }
.files button { width: 61px; height: 14px; border: 1px solid #9aaccc; background: #eef3fa; font-size: 9.500px; line-height: 12px; letter-spacing: -.4px; color: #1a4372; font-weight: 500; }
.limit { height: 14px; line-height: 17px; font-size: 9px; text-align: right; color: #f0a05c; }
.acts { display: flex; gap: 3px; padding-left: 94px; height: 31px; }
.big .acts { padding-left: 93px; }
.acts button { width: 67px; height: 22px; border-radius: 3px; color: #fff; font-size: 10.500px; line-height: 19px; font-weight: 700; letter-spacing: .6px; }
.go { border: 1px solid #1b4d96; background: linear-gradient(#3a9af0, #1173da); }
.no { border: 1px solid #8d7f79; background: #ab9d98; }
.prog { height: 51px; border: 2px solid #8e9095; background: #fff; padding: 7px 9px 0; font-size: 9px; line-height: 12px; }
.prog > p { text-align: right; color: #222; }
.prog-bar { height: 11px; border: 1px solid #ddd; background: linear-gradient(#e8e8e6, #f8f8f8); }
.prog-bar i { display: block; width: 3px; height: 10px; background: #b9d884; }
.stats { display: flex; justify-content: space-between; line-height: 13px; color: #888; font-size: 8.800px; }
.stats b { font-weight: 500; color: #111; }
.banner { margin-top: 8px; height: 47px; display: flex; border: 1px solid #94a6b8; background: #f7fbfc; padding: 1px 0 0 9px; overflow: hidden; }
.banner > div { width: 226px; }
.banner svg { width: 60px; height: 46px; }
.banner em { display: block; font-size: 12px; line-height: 20px; font-weight: 700; font-style: italic; letter-spacing: -1.100px; color: #1d4fa3; }
.banner p { font-size: 19px; line-height: 22px; font-weight: 700; letter-spacing: -1.400px; word-spacing: 3px; color: #222; margin-top: -2px; }
.banner strong { color: #f36b21; }
.banner i { display: inline-block; width: 22px; height: 20px; line-height: 18px; text-align: center; background: #cfe0f2; border: 1px solid #9fb8d6; border-radius: 4px; color: #223b7c; }
.after { display: flex; gap: 6px; align-items: center; height: 20px; font-size: 10px; }
.after i { width: 10px; height: 10px; border: 1px solid #999; background: #fff; font-size: 8px; line-height: 9px; text-align: center; }
.up-status { display: flex; align-items: center; height: 18px; background: #eef0ee; padding-left: 75px; font-size: 9px; letter-spacing: -.2px; color: #222; }
.globe { width: 9px; height: 9px; margin-right: 4px; border-radius: 50%; background: radial-gradient(circle at 60% 40%, #4fbf57 35%, #2b70bf 40%); }
.st-r { margin-left: 86px; }

/* Browser window behind the popup */
.ie-back { position: absolute; left: 360px; top: 0; width: 346px; height: 92px; background: #e4f0f7; font-size: 9px; white-space: nowrap; border-top: 5px solid #b9aa94; }
.ie-addr { height: 17px; display: flex; align-items: center; background: #1c3e68; padding-bottom: 2px; }
.ie-url { width: 224px; height: 15px; background: #edf2f5; padding: 6px 0 0 213px; }
.ie-url svg { width: 5px; height: 3px; }
.ie-b { width: 16px; height: 15px; background: #dbe8f1; border-left: 1px solid #96a9bd; padding: 2px; line-height: 11px; }
.ie-b svg { width: 10px; height: 10px; }
.x { color: #c43b2d; }
.bing { margin-left: 4px; flex: 1; height: 15px; background: #c9ced6; display: flex; align-items: center; gap: 4px; font-style: italic; color: #555; padding-left: 2px; }
.bing i { width: 10px; height: 10px; line-height: 9px; background: #f29322; color: #fff; text-align: center; }
.ie-menu { height: 19px; line-height: 19px; border-bottom: 1px solid #d8b9c2; color: #222; }
.ie-cmd { height: 42px; display: flex; align-items: center; gap: 7px; justify-content: flex-end; padding-top: 15px; border-bottom: 2px solid #8b9499; color: #222; background: linear-gradient(#e2f0f8, #f3f7f8); }
.ie-cmd svg { width: 10px; height: 10px; }
.ie-cmd svg.c { width: 5px; height: 3px; }
.ie-cmd svg.last { margin-left: -5px; }
.ie-cmd span { margin-left: 3px; letter-spacing: -.4px; }
.ie-tabs { height: 12px; background: #dcdcda; text-align: right; font-size: 6.500px; line-height: 10px; color: #c4563e; }

/* Open-file dialog */
.dialog { position: absolute; left: 300px; top: 90px; width: 406px; height: 296px; border: 1px solid #23406f; border-radius: 4px 4px 0 0; background: linear-gradient(100deg, #9fb6cd, #3f74d0 35%, #2f6ad0 60%, #8bb0e2); padding: 0 5px 5px 4px; font-size: 8.500px; white-space: nowrap; color: #222; box-shadow: 0 3px 5px rgba(0, 0, 0, .4); }
.dl-title { height: 19px; display: flex; align-items: center; }
.dl-title svg { width: 10px; height: 10px; margin: 0 5px 0 1px; }
.dl-title span { flex: 1; margin-top: -3px; }
.dl-title b { width: 30px; height: 10px; margin-bottom: 7px; background: #c9432f; color: #fff; font-size: 7px; line-height: 10px; text-align: center; }
.dl-addr { display: flex; height: 22px; align-items: center; padding-left: 2px; }
.nav { width: 16px; height: 16px; border: 1px solid #667b92; border-radius: 50%; background: #a9bed3; }
.path { display: flex; align-items: center; width: 214px; height: 15px; margin-left: 11px; background: #eef3f8; padding: 0 4px; gap: 4px; border: 1px solid #7f97b3; line-height: 12px; }
.path svg { width: 9px; height: 8px; }
.path svg.c { width: 5px; height: 3px; margin-left: auto; margin-right: 2px; }
.path svg.rl { width: 10px; height: 10px; }
.search { display: flex; align-items: center; width: 132px; height: 15px; margin-left: 4px; background: #c3d2e3; border: 1px solid #7f97b3; color: #6d7a88; padding: 0 3px 0 8px; }
.search span { flex: 1; font-style: italic; }
.search svg { width: 9px; height: 9px; }
.dl-tools { display: flex; align-items: center; height: 20px; background: linear-gradient(#f3f7fb, #cfdeed); padding-left: 12px; }
.nf { margin-left: 22px; flex: 1; }
.dl-tools i { width: 10px; height: 9px; border: 1px solid #4e7baa; border-right-width: 4px; margin: 0 14px; }
.dl-tools b { width: 10px; height: 10px; border-radius: 50%; background: #1c4c9f; color: #fff; line-height: 10px; text-align: center; margin-right: 9px; }
.dl-main { display: grid; grid-template-columns: 92px 10px 1fr 9px; height: 180px; background: #fff; overflow: hidden; }
.places { padding: 5px 0 0 14px; }
.places li { display: flex; align-items: center; height: 13.700px; padding-left: 7px; }
.places .top { padding-left: 0; }
.places .top.gap { margin-top: 13.500px; }
.places svg { width: 10px; height: 10px; margin-right: 4px; }
.scroll { background: #eee; padding-top: 12px; }
.scroll i { display: block; height: 103px; border: 1px solid #a8a8a8; background: linear-gradient(90deg, #f5f5f5, #ccc); }
.scroll.right { padding-top: 8px; }
.scroll.right i { height: 82px; }
.grid { display: grid; grid-template-columns: repeat(5, 53.600px); grid-template-rows: 45px 64px 70px; padding: 5px 0 0 9.500px; text-align: center; line-height: 10px; }
.grid span { position: relative; }
.grid svg { width: 32px; height: 30px; margin: 0 auto 1px; }
.zip b { position: absolute; left: 13px; top: 3px; width: 20px; background: #6b5d10; color: #fff; }
.word-w { font: 700 14px "Liberation Sans", sans-serif; fill: #fff; }
.dl-foot { height: 49px; background: #f0f0ef; padding: 5px 11px 0 85px; }
.fn { display: flex; align-items: center; height: 16px; }
.fn > span { width: 51px; }
.fn p { width: 120px; height: 15px; background: #fff; padding: 0 4px 0 2px; display: flex; justify-content: space-between; align-items: center; }
.fn .sel { margin-left: auto; border: 1px solid #999; background: #e4e4e4; }
.fn p svg { width: 5px; height: 3px; }
.btns { display: flex; justify-content: flex-end; gap: 10px; margin-top: 4px; }
.btns button { width: 55px; height: 17px; border: 1px solid #888; border-radius: 2px; background: #eee; line-height: 13px; }
.btns .def { border-color: #3c9bd0; background: #e2f2fa; }
```
